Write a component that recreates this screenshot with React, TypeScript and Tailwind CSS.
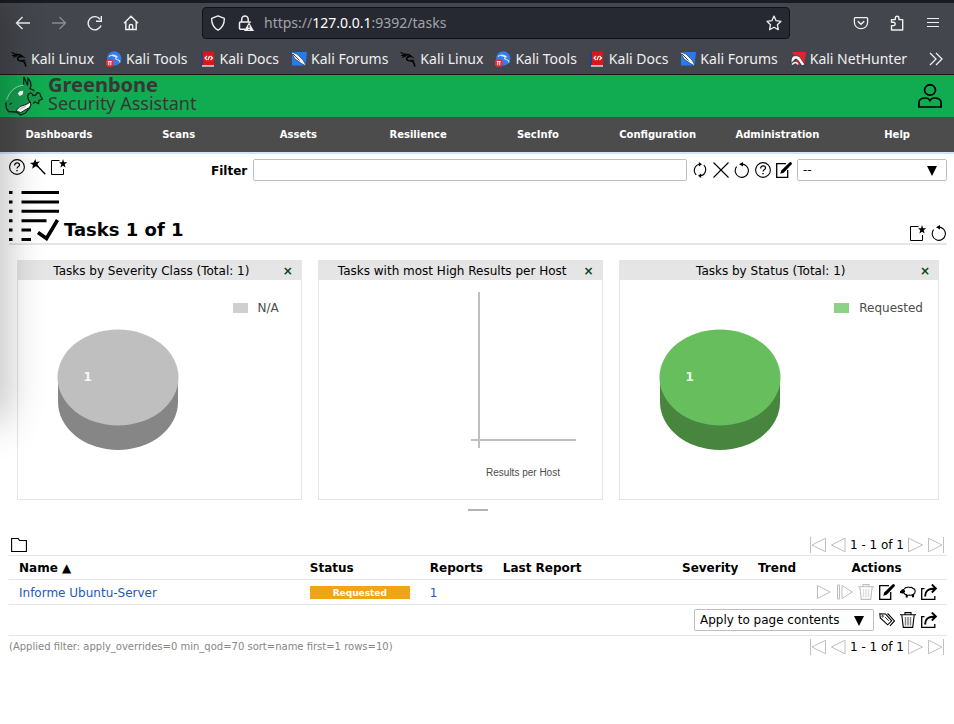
import React from 'react';

type IconProps = { className?: string };

const Svg = ({ children, className = 'size-4', box = '0 0 16 16' }: { children: React.ReactNode; className?: string; box?: string }) => (
  <svg viewBox={box} className={`shrink-0 ${className}`} fill="none" stroke="currentColor" aria-hidden="true">
    {children}
  </svg>
);

/* ---------- browser icons ---------- */

const BackIcon = () => (
  <Svg>
    <path d="M15 8H1.5M7.5 2 1.5 8l6 6" strokeWidth="1.4" />
  </Svg>
);
const ForwardIcon = () => (
  <Svg>
    <path d="M1 8h13.5M8.5 2l6 6-6 6" strokeWidth="1.3" />
  </Svg>
);
const ReloadIcon = () => (
  <Svg>
    <path d="M14 10.500A6.600 6.600 0 1 1 13 4.200" strokeWidth="1.400" />
    <path d="M14.300 1v5.300H9" strokeWidth="1.400" />
  </Svg>
);
const HomeIcon = () => (
  <Svg>
    <path d="M1 8.3 8 1.3l7 7M2.8 7v7.5h10.4V7M6.3 14.5V10.7q0-1.2 1.7-1.2t1.7 1.2v3.8" strokeWidth="1.4" />
  </Svg>
);
const ShieldIcon = () => (
  <Svg>
    <path d="M8 .9 14.3 3.4q.4 8-6.3 11.8Q1.3 11.4 1.7 3.4z" strokeWidth="1.4" strokeLinejoin="round" />
  </Svg>
);
const LockIcon = () => (
  <Svg>
    <path d="M7 14.3H2.5q-1 0-1-1V8q0-1 1-1h9q.8 0 1 .8M3.7 7V4.5a3.2 3.4 0 0 1 6.5 0V7" strokeWidth="1.5" />
    <path d="M11 7.3 16 16H6z" fill="currentColor" stroke="none" />
    <path d="M11 10v3M11 13.9v1" stroke="#272932" strokeWidth="1.2" />
  </Svg>
);
const StarIcon = () => (
  <Svg>
    <path d="M8 1.1l2.1 4.6 4.9.6-3.6 3.4.9 5L8 12.2l-4.4 2.5.9-5L1 6.3l4.9-.6z" strokeWidth="1.3" strokeLinejoin="round" />
  </Svg>
);
const PocketIcon = () => (
  <Svg>
    <path d="M2.3 2.7h11.4q.9 0 .9.9v3.9a6.6 6.2 0 0 1-13.2 0V3.6q0-.9.9-.9z" strokeWidth="1.3" />
    <path d="M4.8 6.3 8 9.3l3.2-3" strokeWidth="1.5" />
  </Svg>
);
const PuzzleIcon = () => (
  <Svg>
    <path d="M2.5 15V10.6h2a1.7 1.7 0 0 0 0-3.4h-2V4.6h3.8V3a1.8 1.8 0 0 1 3.6 0v1.6h3.8V15z" strokeWidth="1.4" strokeLinejoin="round" />
  </Svg>
);
const MenuIcon = () => (
  <Svg>
    <path d="M2 3.5h12M2 7.500h12M2 11.500h12" strokeWidth="1.200" />
  </Svg>
);

const KaliIcon = () => (
  <Svg>
    <g stroke="#050506" strokeLinecap="round">
      <path d="M1 1.5 4 3.2 7.5 3.5M1.5 4.5l3.5-.3M2.5 6.2 6 4.8" strokeWidth="1.2" />
      <path d="M5 3.8q4-.6 6 1.6-4.500 0-4.300 2.600.3 2 4.200 2 3.300.3 3.800 5" strokeWidth="1.600" />
      <path d="M9 3.500 12.500 6l1.200.8M11 9l3 .5" strokeWidth="1" />
    </g>
  </Svg>
);
const ToolsIcon = () => (
  <Svg>
    <circle cx="8.2" cy="7.500" r="7.200" fill="#367bf0" stroke="none" />
    <path d="M3 5.500q4-3 8 0M6 4.500l5 1.500q-3 1 0 2.500 3 .5 3 3" stroke="#dce9ff" strokeWidth="1.100" />
    <circle cx="3.700" cy="12" r="4" fill="#e33137" stroke="none" />
    <path d="M2.800 10.500v3.700M4.800 10.500v3.700M1.800 10.500h4" stroke="#fff" strokeWidth=".9" />
  </Svg>
);
const DocsIcon = () => (
  <Svg>
    <path d="M1.500 .5h12.500v14h-12.500z" fill="#dc1519" stroke="none" />
    <path d="M1 .5h2v15h-2z" fill="#263f86" stroke="none" />
    <path d="M2 14.200h12v1.500h-12z" fill="#ddd" stroke="none" />
    <path d="M7 5 5 7l2 2M10.500 5l2 2-2 2M9.500 5 8 9" stroke="#fff" strokeWidth="1.200" />
  </Svg>
);
const ForumsIcon = () => (
  <Svg>
    <path d="M1 1h15l-1.500 13.500H1z" fill="#287bed" stroke="none" />
    <path d="M0 .8 6 3l6 6 3.500 6.200-5-2.700L4 8z" fill="#f2f3f5" stroke="#172338" strokeWidth=".6" />
    <path d="m2 3 6.500 6.500" stroke="#30343b" strokeWidth=".9" />
  </Svg>
);
const HunterIcon = () => (
  <Svg>
    <path d="M2 1h14l-1.500 12.500H8z" fill="#e3242f" stroke="none" />
    <path d="M1.200 12.500Q0 4.500 6 4.500q4 0 5.500 4l3.500 5-3 1.500-3.500-5Q6 6.500 4 9.500z" fill="#f5f5f5" stroke="#14171c" strokeWidth=".7" />
    <path d="M2 13.500q4-4 6 0" stroke="#f5f5f5" strokeWidth="1.500" />
  </Svg>
);

/* ---------- application icons ---------- */

const HelpIcon = () => (
  <Svg>
    <circle cx="8" cy="8" r="7.4" strokeWidth="1.1" />
    <path d="M5.6 6.5q0-2.6 2.5-2.6 2.4 0 2.4 2 0 1.1-1.3 1.900-1.100.7-1.100 1.700" strokeWidth="1.200" />
    <path d="M8 10.900v1.400" strokeWidth="1.400" />
  </Svg>
);
const WandIcon = () => (
  <Svg>
    <path d="m6 5.500 9.300 9.800" strokeWidth="1.300" />
    <path d="M5.300 0 6.200 3l3.700-.5-2.500 2.600L9 8.800 5.700 7.200 2.200 9.800l.8-3.900L0 4l3.600-.5z" fill="currentColor" stroke="none" />
  </Svg>
);
const NewIcon = () => (
  <Svg>
    <path d="M8.500 1.500h-8v14h12V10" />
    <path d="m12 0 1.100 3.200 3 .1-2.400 1.900.9 3.300L12 6.700 9.400 8.500l.9-3.300L8 3.300l3-.1z" fill="currentColor" stroke="none" />
  </Svg>
);
const RefreshIcon = () => (
  <Svg>
    <path d="M4.200 12.800A6.200 6.200 0 0 1 8 2.200M8 13.800A6.200 6.200 0 0 0 11.800 3.200" strokeWidth="1.100" />
    <path d="M6.800 0 10 2.200 6.800 4.400zM9.200 11.600 6 13.800 9.200 16z" fill="currentColor" stroke="none" />
  </Svg>
);
const CloseIcon = () => (
  <Svg>
    <path d="m.5.5 15 15m0-15-15 15" strokeWidth="1.1" />
  </Svg>
);
const ResetIcon = () => (
  <Svg>
    <path d="M2.600 4.700A6.600 6.600 0 1 0 7 2.200h3" strokeWidth="1.100" />
    <path d="M9 0 5 2.200l4 2.200z" fill="currentColor" stroke="none" />
  </Svg>
);
const EditIcon = () => (
  <Svg>
    <path d="M10 1.600H.7v13.700h11V8" strokeWidth="1.300" />
    <path d="m4.200 11.800 1-3.300L13.500.5q1-.8 1.900 0 .9 1 .1 1.900l-7.800 8.300z" fill="currentColor" stroke="none" />
  </Svg>
);
const TrashIcon = ({ className = 'size-4' }: IconProps) => (
  <Svg className={className}>
    <path d="M0 2.700h16M5 2.500V.6h6v1.900M1.800 3l1.500 12.400h9.400L14.200 3" strokeWidth="1.100" />
    <path d="M5.500 5v8.500M8 5v8.500M10.500 5v8.500" strokeWidth="1.400" opacity=".5" />
  </Svg>
);
const SheepIcon = () => (
  <Svg>
    <path d="M4.500 5.200Q5 3 7 3.600q1.300-1.200 2.800 0 2-.8 3 .8 2.600.5 2.300 2.900.3 2-1.600 2.900v2.500h-1v-2q-1.500.8-3 .3-1.200.5-2.300 0v2h-1v-2.400Q4.600 10.600 4.200 9" strokeWidth="1.100" />
    <path d="M0 7.500 2 5.500l2-.7 1.200 2.700L3.500 9.800 0 9z" fill="currentColor" stroke="none" />
  </Svg>
);
const ExportIcon = () => (
  <Svg>
    <path d="M3.500 4.700H.7v10.600h13.100V12" strokeWidth="1.300" />
    <path d="M4.300 12.500Q3.500 4.500 14.500 4.500M10.800.5l4.200 4-4.200 4" strokeWidth="1.900" />
  </Svg>
);
const TagsIcon = () => (
  <Svg>
    <path d="M.8 1.700 6.500 2l6.200 6.800-4 4L1.300 6z" strokeWidth="1.100" />
    <path d="M8.300 1.900h.7l6.500 7-4.500 5" strokeWidth="1.100" />
    <path d="m6.200 5.200 3.500 3.600" strokeWidth=".8" />
    <circle cx="3.600" cy="4.200" r=".8" strokeWidth=".8" />
  </Svg>
);
const FolderIcon = () => (
  <Svg>
    <path d="M.6 14.500V1.500h6.600l1.300 2h6.900v11z" strokeWidth="1.100" />
  </Svg>
);
const PlayIcon = () => (
  <Svg>
    <path d="M1.500 1.500v13L14 8z" />
  </Svg>
);
const ResumeIcon = () => (
  <Svg>
    <path d="M.5 1v14h2V1zM5 1.500v13L15.300 8z" />
  </Svg>
);
const FirstIcon = () => (
  <Svg>
    <path d="M.5 0v16M15.500 1.200v13.600L2 8z" />
  </Svg>
);
const PrevIcon = () => (
  <Svg>
    <path d="M15 1.200v13.600L1.500 8z" />
  </Svg>
);
const NextIcon = () => (
  <Svg>
    <path d="M.5 1.200v13.600L14.500 8z" />
  </Svg>
);
const LastIcon = () => (
  <Svg>
    <path d="M.5 1.200v13.600L14 8zM15.500 0v16" />
  </Svg>
);
const UserIcon = () => (
  <Svg className="size-6" box="0 0 24 24">
    <ellipse cx="12" cy="6" rx="5.5" ry="5.2" strokeWidth="1.7" />
    <path d="M.9 23v-4.5Q1.200 14 8 14q2.500 0 4 2.500 1.500-2.500 4-2.500 6.800 0 7.100 4.500V23z" strokeWidth="1.700" />
  </Svg>
);
const TaskIcon = () => (
  <Svg className="size-[50px]" box="0 0 50 50">
    <path d="M0 1.500h3.500M0 10.900h3.500M0 20.300h3.500M0 29.700h3.500M0 39h3.500M0 48.500h3.500M12.500 1.500H50M12.500 10.900H50M12.500 20.300H50M12.500 29.700h25M12.500 39h9.500M12.500 48.500h9.500" strokeWidth="3" />
    <path d="m29 41.500 8.500 6L48.500 29" strokeWidth="3.600" />
  </Svg>
);
const DragonLogo = () => (
  <Svg className="h-10 w-[38px]" box="0 0 38 40">
    <path d="M18.500 9V1l4 8.500L23 2q3 3 3 7.500l-1.500 2.500L29 15q5 0 6 3.500l2.500 4.500-3 1-1 3.500-3-2-2 2-2.500-4-1 7-5 6-5 2.500-3-1-7.500 1Q.3 33 1 26.500 3 18 9 13q4-4 9.500-4z" fill="#159c4e" stroke="none" />
    <path d="M18.500 9 19 .800l3.500 8.700L23 2.200q3 3 3 7.500l-1 3 4.500 2M3.500 35.500Q.3 32 1 26.500M3.500 35.500l8 .5 4 3 5-2 4-5 1.500-4" stroke="#12231b" strokeWidth="1.300" />
    <path d="M18.500 9Q6 10.500 1.500 24" stroke="#a9dcbc" strokeWidth=".9" />
    <path d="M12.800 17.500 15 15l3.300-.2-.5 3.500-3 1.700z" fill="#fff" stroke="none" />
    <path d="m11.500 34 3.500-3.500 6-2 4.500-2.500q1 3-1 5.500L20 34l-4 2.500-4-1z" fill="#fff" stroke="#12231b" strokeWidth="1" />
    <path d="m15 33 6-3" stroke="#888" strokeWidth=".6" />
    <path d="M25 26q-4-5-1-8.500 3-1.500 4 2 4 0 4-3M32 16.500q4 .5 3.500 3.500l2 3-3.500 1.500-.5 3-3.500-1.500-2 1.500" stroke="#12231b" strokeWidth="1.300" />
    <path d="M4.500 28.500 7 27" stroke="#12231b" strokeWidth="1.200" />
  </Svg>
);

/* ---------- building blocks ---------- */

const IconButton = ({ label, children, className = '' }: { label: string; children: React.ReactNode; className?: string }) => (
  <button type="button" aria-label={label} title={label} className={`block shrink-0 ${className}`}>
    {children}
  </button>
);

const bookmarks = [
  { name: 'Kali Linux', icon: <KaliIcon /> },
  { name: 'Kali Tools', icon: <ToolsIcon /> },
  { name: 'Kali Docs', icon: <DocsIcon /> },
  { name: 'Kali Forums', icon: <ForumsIcon /> },
  { name: 'Kali Linux', icon: <KaliIcon /> },
  { name: 'Kali Tools', icon: <ToolsIcon /> },
  { name: 'Kali Docs', icon: <DocsIcon /> },
  { name: 'Kali Forums', icon: <ForumsIcon /> },
  { name: 'Kali NetHunter', icon: <HunterIcon /> },
];

const Browser = () => (
  <div className="border-t-[3px] border-b border-t-[#1a1b20] border-b-[#17181d] bg-[#44464d] font-['Noto_Sans',sans-serif] text-[#f0f0f1]">
    <div className="flex h-10 items-center pr-[13px] pl-[15px]">
      <div className="flex w-[187px] gap-5">
        <IconButton label="Back"><BackIcon /></IconButton>
        <IconButton label="Forward" className="text-[#8b8c91]"><ForwardIcon /></IconButton>
        <IconButton label="Reload"><ReloadIcon /></IconButton>
        <IconButton label="Home"><HomeIcon /></IconButton>
      </div>
      <div className="flex h-8 flex-1 items-center rounded border border-[#111217] bg-[#272932] px-[7px]">
        <ShieldIcon />
        <span className="ml-3"><LockIcon /></span>
        <div className="ml-2.5 flex-1 text-sm text-[#a2a3a8]">
          https://<span className="text-white">127.0.0.1</span>:9392/tasks
        </div>
        <IconButton label="Bookmark this page"><StarIcon /></IconButton>
      </div>
      <div className="ml-[63px] flex gap-5">
        <IconButton label="Pocket"><PocketIcon /></IconButton>
        <IconButton label="Extensions"><PuzzleIcon /></IconButton>
        <IconButton label="Menu"><MenuIcon /></IconButton>
      </div>
    </div>
    <div className="flex h-[31px] items-center gap-3 pr-2.5 pl-[11px] text-sm">
      {bookmarks.map((b, i) => (
        <a key={i} href="#" className="flex items-center gap-1 whitespace-nowrap">
          {b.icon}
          {b.name}
        </a>
      ))}
      <IconButton label="More bookmarks" className="ml-auto">
        <Svg><path d="m2 2 6 6-6 6M8 2l6 6-6 6" strokeWidth="1.3" /></Svg>
      </IconButton>
    </div>
  </div>
);

const menu = ['Dashboards', 'Scans', 'Assets', 'Resilience', 'SecInfo', 'Configuration', 'Administration', 'Help'];

const Header = () => (
  <header>
    <div className="flex h-[42px] items-center justify-between bg-[#11ab51] pr-3 pl-[5px]">
      <div className="flex items-center gap-[5px] font-['Noto_Sans',sans-serif] text-[#393637]">
        <DragonLogo />
        <div className="pb-1">
          <div className="text-xl leading-[19px] font-bold">Greenbone</div>
          <div className="text-lg leading-[19px]">Security Assistant</div>
        </div>
      </div>
      <IconButton label="User"><UserIcon /></IconButton>
    </div>
    <nav className="overflow-hidden border-b-2 border-[#d3e4fa] bg-[#4c4c4c]">
      <ul className="-mr-[3px] -ml-px flex h-[35px] items-center text-[10px] font-bold text-white">
        {menu.map((m) => (
          <li key={m} className="flex-1 text-center"><a href="#">{m}</a></li>
        ))}
      </ul>
    </nav>
  </header>
);

const Select = ({ label, value, className }: { label: string; value: string; className: string }) => (
  <div className={`relative ${className}`}>
    <select aria-label={label} className="block h-[22px] w-full appearance-none rounded-[2px] border border-[#bfbfbf] bg-white pl-[5px] text-black">
      <option>{value}</option>
    </select>
    <svg viewBox="0 0 10 10" className="pointer-events-none absolute top-[7px] right-2.5 size-2.5" aria-hidden="true">
      <path d="M0 0h10L5 10z" />
    </svg>
  </div>
);

const Panel = ({ title, children }: { title: string; children: React.ReactNode }) => (
  <section className="flex h-60 flex-col border border-t-0 border-[#e5e5e5]">
    <div className="flex h-5 shrink-0 items-center bg-[#e5e5e5] pt-0.5 pr-2 pl-0.5">
      <h2 className="flex-1 text-center whitespace-nowrap">{title}</h2>
      <button type="button" aria-label={`Remove ${title}`} className="font-bold text-[#074320]">×</button>
    </div>
    {children}
  </section>
);

const Pie = ({ top, side, count, swatch, legend, className }: { top: string; side: string; count: number; swatch: string; legend: string; className: string }) => (
  <div className={`flex flex-1 items-start justify-between pl-[39px] ${className}`}>
    <svg viewBox="0 0 122 122" className="mt-[49px] size-[122px]" role="img" aria-label={`${legend}: ${count}`}>
      <path d="M1 48v25a60 48 0 0 0 120 0V48z" fill={side} />
      <ellipse cx="61" cy="48.5" rx="60.5" ry="48" fill={top} />
      <text x="26.5" y="52" fill="#fff" fillOpacity=".9" fontSize="12" fontWeight="bold">{count}</text>
    </svg>
    <div className="mt-5 flex items-center gap-2.5 text-[#4c4c4c]">
      <span className={`h-2.5 w-[15px] ${swatch}`} />
      {legend}
    </div>
  </div>
);

const Pagination = () => (
  <div className="flex items-center gap-1 pr-[3px] text-[#bfbfbf]">
    <IconButton label="First page"><FirstIcon /></IconButton>
    <IconButton label="Previous page"><PrevIcon /></IconButton>
    <span className="text-black">1 - 1 of 1</span>
    <IconButton label="Next page"><NextIcon /></IconButton>
    <IconButton label="Last page"><LastIcon /></IconButton>
  </div>
);

const TaskTable = () => (
  <table className="w-full table-fixed border-collapse text-left">
    <colgroup>
      <col className="w-[31%]" />
      <col className="w-[120px]" />
      <col className="w-[73px]" />
      <col />
      <col className="w-[76px]" />
      <col className="w-[58px]" />
      <col className="w-[141px]" />
    </colgroup>
    <thead>
      <tr className="h-6 border-y border-[#e5e5e5]">
        <th className="px-2.5"><button type="button" className="font-bold">Name ▲</button></th>
        <th className="px-2.5">Status</th>
        <th className="px-2.5">Reports</th>
        <th className="px-2.5">Last Report</th>
        <th className="px-2.5">Severity</th>
        <th className="px-2.5">Trend</th>
        <th className="px-2.5 text-center">Actions</th>
      </tr>
    </thead>
    <tbody>
      <tr className="h-[25px] border-b border-[#e5e5e5]">
        <td className="px-2.5 pt-0.5"><a href="#" className="text-[#1a5ab8]">Informe Ubuntu-Server</a></td>
        <td className="px-2.5">
          <div className="h-[13px] w-[100px] bg-[#f0a519] text-center text-[9px] leading-[14px] font-bold text-white">Requested</div>
        </td>
        <td className="px-2.5 pt-0.5"><a href="#" className="text-[#1a5ab8]">1</a></td>
        <td />
        <td />
        <td />
        <td className="pr-2.5">
          <div className="flex justify-end gap-[5px]">
            <IconButton label="Start" className="text-[#bfbfbf]"><PlayIcon /></IconButton>
            <IconButton label="Resume" className="text-[#bfbfbf]"><ResumeIcon /></IconButton>
            <IconButton label="Move to trashcan" className="text-[#bfbfbf]"><TrashIcon /></IconButton>
            <IconButton label="Edit"><EditIcon /></IconButton>
            <IconButton label="Clone"><SheepIcon /></IconButton>
            <IconButton label="Export"><ExportIcon /></IconButton>
          </div>
        </td>
      </tr>
    </tbody>
  </table>
);

export default function App() {
  return (
    <div className="relative min-h-screen overflow-hidden bg-white font-['DejaVu_Sans',sans-serif] text-xs text-black">
      <Browser />
      <Header />
      <main className="pt-[5px] pr-[7px] pl-[9px]">
        <div className="flex items-start justify-between">
          <div className="flex gap-[5px]">
            <IconButton label="Help: Tasks"><HelpIcon /></IconButton>
            <IconButton label="Task wizard"><WandIcon /></IconButton>
            <IconButton label="New task"><NewIcon /></IconButton>
          </div>
          <div className="flex w-[736px] items-center">
            <label htmlFor="filter" className="mr-1.5 pt-0.5 font-bold">Filter</label>
            <input id="filter" type="text" className="h-[22px] min-w-0 flex-1 rounded-[2px] border border-[#bfbfbf] px-1.5" />
            <div className="mx-[5px] flex gap-[5px]">
              <IconButton label="Update filter"><RefreshIcon /></IconButton>
              <IconButton label="Remove filter"><CloseIcon /></IconButton>
              <IconButton label="Reset filter"><ResetIcon /></IconButton>
              <IconButton label="Help: Powerfilter"><HelpIcon /></IconButton>
              <IconButton label="Edit filter"><EditIcon /></IconButton>
            </div>
            <Select label="Saved filter" value="--" className="w-[150px]" />
          </div>
        </div>

        <div className="mt-2.5 flex items-end justify-between border-b-2 border-[#e5e5e5] pb-0.5">
          <div className="flex items-end gap-[5px]">
            <TaskIcon />
            <h1 className="text-lg leading-[22px] font-bold">Tasks 1 of 1</h1>
          </div>
          <div className="flex gap-[5px]">
            <IconButton label="Add dashboard display"><NewIcon /></IconButton>
            <IconButton label="Reset dashboard"><ResetIcon /></IconButton>
          </div>
        </div>

        <div className="mt-[15px] grid grid-cols-[8fr_8fr_9fr] gap-4 px-2">
          <Panel title="Tasks by Severity Class (Total: 1)">
            <Pie top="#bfbfbf" side="#868686" count={1} swatch="bg-[#cfcfcf]" legend="N/A" className="pr-[22px]" />
          </Panel>
          <Panel title="Tasks with most High Results per Host">
            <svg viewBox="0 0 282 219" preserveAspectRatio="xMinYMin" className="h-[219px] w-full" role="img" aria-label="Results per Host">
              <path d="M160 12v156M152 160h105" stroke="#000" strokeOpacity=".25" strokeWidth="2" />
              <text x="204" y="196" textAnchor="middle" fontSize="10" fill="#4c4c4c" className="font-['Liberation_Sans',sans-serif]">Results per Host</text>
            </svg>
          </Panel>
          <Panel title="Tasks by Status (Total: 1)">
            <Pie top="#66bf5c" side="#48853f" count={1} swatch="bg-[#8fd087]" legend="Requested" className="pr-[15px]" />
          </Panel>
        </div>
        <div className="mx-auto mt-[9px] h-0.5 w-5 bg-[#b3b3b3]" />

        <div className="mt-[26px] flex h-[18px] items-start justify-between">
          <IconButton label="Filter options" className="ml-0.5"><FolderIcon /></IconButton>
          <Pagination />
        </div>
        <TaskTable />
        <div className="flex h-[31px] items-center justify-end gap-[5px] border-b border-[#e5e5e5] pr-2.5">
          <Select label="Bulk action scope" value="Apply to page contents" className="w-[180px]" />
          <IconButton label="Add tag"><TagsIcon /></IconButton>
          <IconButton label="Move page contents to trashcan"><TrashIcon /></IconButton>
          <IconButton label="Export page contents"><ExportIcon /></IconButton>
        </div>
        <div className="flex h-[21px] items-center justify-between">
          <span className="text-[10px] text-[#868686]">(Applied filter: apply_overrides=0 min_qod=70 sort=name first=1 rows=10)</span>
          <Pagination />
        </div>
      </main>
      <div className="pointer-events-none absolute top-0 -left-5 h-[420px] w-5 shadow-[0_0_40px_0_rgba(0,0,0,0.45)]" />
    </div>
  );
}
